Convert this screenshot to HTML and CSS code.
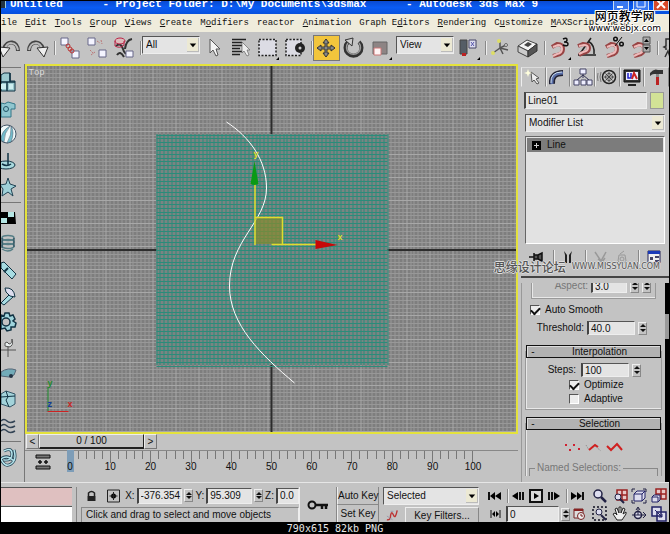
FILE: index.html
```html
<!DOCTYPE html>
<html lang="en">
<head>
<meta charset="utf-8">
<title>3ds Max</title>
<link rel="stylesheet" href="styles.css">
</head>
<body>
<div class="app">
  <header class="titlebar">
    <span class="logo"></span>
    <span class="caption">Untitled      - Project Folder: D:\My Documents\3dsmax      - Autodesk 3ds Max 9</span>
    <span class="winbtns">
      <button aria-label="Minimize"><svg width="14" height="10" viewBox="0 0 14 10"><path d="M3 6h6" stroke="#fff" stroke-width="2"/></svg></button>
      <button aria-label="Maximize"><svg width="14" height="10" viewBox="0 0 14 10"><path d="M3 0v6h8V0" stroke="#fff" fill="none"/></svg></button>
      <button class="close" aria-label="Close"><svg width="14" height="10" viewBox="0 0 14 10"><path d="M3 -1l8 8M11 -1l-8 8" stroke="#fff" stroke-width="2"/></svg></button>
    </span>
  </header>
  <nav class="menubar">
    <a href="#">ile</a><a href="#"><u>E</u>dit</a><a href="#"><u>T</u>ools</a><a href="#"><u>G</u>roup</a><a href="#"><u>V</u>iews</a><a href="#"><u>C</u>reate</a><a href="#">M<u>o</u>difiers</a><a href="#">reactor</a><a href="#"><u>A</u>nimation</a><a href="#">Graph E<u>d</u>itors</a><a href="#"><u>R</u>endering</a><a href="#">C<u>u</u>stomize</a><a href="#"><u>M</u>AXScript</a><a href="#"><u>H</u>elp</a>
  </nav>

  <div class="toolbar">
    <button aria-label="Undo"><svg viewBox="0 0 24 24"><path d="M20 15C20 5 9 3 6 13" fill="none" stroke="#444" stroke-width="4"/><path d="M20 14C18 5 9 5 7 13" fill="none" stroke="#bbb" stroke-width="2"/><path d="M1 11l11 1-7 9z" fill="#eee" stroke="#333"/></svg></button>
    <button aria-label="Redo"><svg viewBox="0 0 24 24"><path d="M4 15C4 5 15 3 18 13" fill="none" stroke="#444" stroke-width="4"/><path d="M4 14C6 5 15 5 17 13" fill="none" stroke="#bbb" stroke-width="2"/><path d="M23 11l-11 1 7 9z" fill="#eee" stroke="#333"/></svg></button>
    <i class="sep"></i>
    <button aria-label="Select and Link"><svg viewBox="0 0 24 24"><path d="M4 2h7v7H4zM15 15h7v7h-7z" fill="#f4f4ff" stroke="#668"/><g fill="none" stroke="#b33"><circle cx="11" cy="10" r="2"/><circle cx="13" cy="13" r="2"/><circle cx="15" cy="15" r="2"/></g></svg></button>
    <button aria-label="Unlink Selection"><svg viewBox="0 0 24 24"><path d="M4 2h7v7H4zM15 14h7v7h-7z" fill="#f4f4ff" stroke="#668"/><g fill="none" stroke="#b77"><path d="M13 5l3 2M17 4l1 4M6 14l3 3M7 19l4-3" stroke-dasharray="2 1"/></g></svg></button>
    <button aria-label="Bind to Space Warp"><svg viewBox="0 0 24 24"><path d="M5 10q5-4 7 3t5 3M6 19q3-5 7 2M14 13q1-9 7-10" fill="none" stroke="#333" stroke-width="2"/><ellipse cx="9" cy="5" rx="5" ry="3" fill="#dbb" stroke="#b24"/><path d="M4 5v5q5 3 9-1V5" fill="none" stroke="#b24"/><path d="M15 15h7v6h-7z" fill="#f4f4ff" stroke="#668"/></svg></button>
    <i class="sep"></i>
    <span class="combo filter"><select aria-label="Selection filter"><option>All</option></select><svg class="arrow" viewBox="0 0 12 12"><path d="M3 5h7l-3.500 4z"/></svg></span>
    <button aria-label="Select Object"><svg viewBox="0 0 24 24"><path d="M9 3v14l3-3 3 6 2-1-2-6h4z" fill="#f4f4f4" stroke="#555"/></svg></button>
    <button aria-label="Select by Name"><svg viewBox="0 0 24 24"><path d="M4 3.500h14M4 6.500h10M4 9.500h11M4 12.500h8M4 15.500h10M4 18.500h8" stroke="#222" stroke-width="1.500"/><path d="M14 6v11l2-2 3 5 2-1-2-5h3z" fill="#eee" stroke="#666" stroke-width=".7"/></svg></button>
    <button aria-label="Rectangular Selection"><svg viewBox="0 0 24 24"><rect x="4" y="3.500" width="17" height="16" fill="#dcdce4" stroke="#222" stroke-width="1.500" stroke-dasharray="2 1.500"/><path d="M24 21v3h-3z"/></svg></button>
    <button aria-label="Window Crossing"><svg viewBox="0 0 24 24"><rect x="4" y="3.500" width="15" height="16" fill="#dcdce4" stroke="#222" stroke-width="1.500" stroke-dasharray="2 1.500"/><circle cx="18" cy="12" r="5" fill="#222"/><circle cx="18" cy="12" r="1.500" fill="#ccc"/></svg></button>
    <i class="sep"></i>
    <button class="active" aria-label="Select and Move"><svg viewBox="0 0 24 24"><path d="M12 3l3 4h-2v4h4V9l4 3-4 3v-2h-4v4h2l-3 4-3-4h2v-4H7v2l-4-3 4-3v2h4V7H9z" fill="#888" stroke="#333"/></svg></button>
    <button aria-label="Select and Rotate"><svg viewBox="0 0 24 24"><path d="M18 6a8 8 0 1 1-11 0" fill="none" stroke="#333" stroke-width="4"/><path d="M18 7a7 7 0 1 1-11 0" fill="none" stroke="#999" stroke-width="1.500"/><path d="M4 4l8-2-1 8z" fill="#ccc" stroke="#333"/></svg></button>
    <button aria-label="Select and Scale"><svg viewBox="0 0 24 24"><path d="M5 6h14v12H5z" fill="#8d8484" stroke="#666"/><path d="M6 12h7v7H6z" fill="#fff4f4" stroke="#c77"/><path d="M24 21v3h-3z"/></svg></button>
    <span class="combo coords"><select aria-label="Reference coordinate system"><option>View</option></select><svg class="arrow" viewBox="0 0 12 12"><path d="M3 5h7l-3.500 4z"/></svg></span>
    <button aria-label="Use Pivot Point Center"><svg viewBox="0 0 24 24"><path d="M4 4h7v14H4z" fill="#555d66" stroke="#444"/><path d="M13 4h7v8h-7z" fill="#dde" stroke="#446"/><path d="M15 6l3 4M18 6l-3 4" stroke="#55a"/><path d="M6 18.500h4" stroke="#b22" stroke-width="3"/><path d="M24 21v3h-3z"/></svg></button>
    <i class="sep"></i>
    <button aria-label="Manipulate"><svg viewBox="0 0 24 24"><path d="M12 4v9M12 12l-7 5M12 12l8 2M12 12l6-3M12 12l3 6" stroke="#555" stroke-width="1.500"/><circle cx="11" cy="5" r="2" fill="#dd6"/><circle cx="5" cy="17" r="2" fill="#dd6"/><circle cx="18" cy="9" r="1.500" fill="#ddd" stroke="#666"/></svg></button>
    <button aria-label="Keyboard Override"><svg viewBox="0 0 24 24"><path d="M3 10l9-6 10 4-9 7z" fill="#f4f4f4" stroke="#444"/><path d="M3 10l10 5v6L3 16z" fill="#ccc" stroke="#444"/><path d="M13 15l9-7v7l-9 6z" fill="#555" stroke="#333"/><path d="M9 9l4-3 4 2-4 3z" fill="#444"/></svg></button>
    <i class="sep"></i>
    <button aria-label="Snap Toggle"><svg viewBox="0 0 24 24"><path d="M5 11l5-3q6 0 6 5t-6 6l-4 1" fill="none" stroke="#944" stroke-width="4"/><path d="M6 11l5-2q4 0 4 4t-5 5l-4 2" fill="none" stroke="#ebb" stroke-width="2"/><path d="M16 3q4-2 4 1 0 2-3 2 4 0 4 2 0 3-5 1" fill="none" stroke="#111" stroke-width="1.500"/><path d="M24 21v3h-3z"/></svg></button>
    <button aria-label="Angle Snap"><svg viewBox="0 0 24 24"><path d="M4 19h18M5 19L17 2M14 5q7 4 6 13" fill="none" stroke="#222" stroke-width="1.500"/><path d="M4 10l5-2q6 0 6 4t-6 5l-4 2" fill="none" stroke="#944" stroke-width="4"/><path d="M5 10l5-1q4 0 4 3t-5 4l-4 2" fill="none" stroke="#ebb" stroke-width="2"/></svg></button>
    <button aria-label="Percent Snap"><svg viewBox="0 0 24 24"><path d="M5 11l5-3q6 0 6 5t-6 6l-4 1" fill="none" stroke="#944" stroke-width="4"/><path d="M6 11l5-2q4 0 4 4t-5 5l-4 2" fill="none" stroke="#ebb" stroke-width="2"/><path d="M21 1l-7 9" stroke="#111"/><g fill="none" stroke="#111" stroke-width="1.500"><circle cx="14.500" cy="3" r="1.800"/><circle cx="20.500" cy="8" r="1.800"/></g></svg></button>
    <button aria-label="Spinner Snap"><svg viewBox="0 0 24 24"><path d="M5 11l5-3q6 0 6 5t-6 6l-4 1" fill="none" stroke="#944" stroke-width="4"/><path d="M6 11l5-2q4 0 4 4t-5 5l-4 2" fill="none" stroke="#ebb" stroke-width="2"/><path d="M15 1h7v7h-7zM15 9h7v7h-7z" fill="#aaa" stroke="#555"/><path d="M16 6l2.500-3L21 6zM16 11l2.500 3 2.500-3z"/></svg></button>
    <i class="sep"></i>
    <button aria-label="Named Selection Sets"><svg viewBox="0 0 24 24"><path d="M9 3H6v7L4 11l2 1v2M5 21l3-6 2 6" fill="none" stroke="#333" stroke-width="1.500"/></svg></button>
  </div>

  <main class="work">
    <aside class="reactor">
      <div class="tools">
        <button aria-label="Rigid bodies"><svg viewBox="0 0 16 22"><path d="M0 3l3-2h6v8h5v10H0z" fill="#9cc9cf" stroke="#134"/><path d="M0 10h14M6 10v9M9 1v9" stroke="#134" stroke-width="1.500"/><path d="M0 12h5v5H0zM8 12h4v5H8z" fill="#cdeef0"/></svg></button>
        <button aria-label="Cloth"><svg viewBox="0 0 16 22"><path d="M0 5q4 2 7-1l7 2v5h-4v8H0z" fill="#8fc6cf" stroke="#378"/><circle cx="5" cy="11" r="2.500" fill="none" stroke="#256"/></svg></button>
        <button aria-label="Soft body"><svg viewBox="0 0 16 22"><circle cx="6" cy="10" r="9" fill="#f0fafa" stroke="#456"/><path d="M9 2q-9 5-9 14l3 2q0-9 6-16zM10 2q4 6 0 16l-4 1q5-8 4-17z" fill="#72bccb" stroke="#456" stroke-width=".5"/></svg></button>
        <button aria-label="Rope"><svg viewBox="0 0 16 22"><ellipse cx="5" cy="15" rx="9" ry="4" fill="#a9dade" stroke="#134"/><path d="M7 3v12M1 14q5 3 9 0" fill="none" stroke="#134" stroke-width="1.500"/></svg></button>
        <button aria-label="Deforming mesh"><svg viewBox="0 0 16 22"><path d="M7 2l2 6 6 2-5 3 2 7-5-4-6 4 1-7-3-4 6-1z" fill="#9fd0d8" stroke="#245"/></svg></button>
      </div>
      <div class="tools">
        <button aria-label="Plane"><svg viewBox="0 0 16 22"><path d="M0 5h14l1 12H0z"/><path d="M7 5h6v5H7zM0 11h6v5H0z" fill="#b5e6e4"/></svg></button>
        <button aria-label="Spring"><svg viewBox="0 0 16 22"><g fill="none" stroke="#567e86" stroke-width="1.500"><ellipse cx="7" cy="5" rx="6" ry="2.500"/><ellipse cx="7" cy="9" rx="6" ry="2.500"/><ellipse cx="7" cy="13" rx="6" ry="2.500"/><path d="M1 16q6 4 11 0"/></g><path d="M1 5v10M13 5v9" stroke="#245"/></svg></button>
        <button aria-label="Dashpot"><svg viewBox="0 0 16 22"><path d="M0 4l3-1 12 12-4 5L0 9z" fill="#a7dce2" stroke="#134"/><path d="M7 9l-4 4" stroke="#134" stroke-width="2"/></svg></button>
        <button aria-label="Motor"><svg viewBox="0 0 16 22"><path d="M0 18l9-9 3 3-9 8z" fill="#a7dce2" stroke="#134"/><path d="M4 3q9-1 10 9l-5-1-4-4z" fill="#dde" stroke="#134"/></svg></button>
        <button aria-label="Gear"><svg viewBox="0 0 16 22"><path d="M4 2h4l1 3 3-1 2 4-2 2 3 2-1 4-4 0v3l-4 1-2-3-4 1V4l3 1z" fill="#9fd4dc" stroke="#134" stroke-width="1.500"/><circle cx="5" cy="11" r="4" fill="#c3c3c3" stroke="#134" stroke-width="1.500"/></svg></button>
        <button aria-label="Wind"><svg viewBox="0 0 16 22"><path d="M0 13h15M7 9v11M4 9q-1-4 2-4l2 2q3 0 3-5 2 7-3 8z" fill="#e8eeee" stroke="#555"/></svg></button>
        <button aria-label="Toy car"><svg viewBox="0 0 16 22"><path d="M0 9q7-5 15-2l-2 5-5 2-8-1z" fill="#72abb8" stroke="#567"/><circle cx="10" cy="13" r="2" fill="#234"/></svg></button>
        <button aria-label="Fracture"><svg viewBox="0 0 16 22"><path d="M0 5l5-3 9 3v10l-5 3-9-3z" fill="#a3d3da" stroke="#356"/><path d="M5 2l2 6-2 3 3 7M0 8l14-1" fill="none" stroke="#134"/></svg></button>
        <button aria-label="Water"><svg viewBox="0 0 16 22"><path d="M0 6q3-3 6 0t8 0M0 11q3-3 6 0t8 0M0 16q3-3 6 0t8 0" fill="none" stroke="#345" stroke-width="1.500"/></svg></button>
      </div>
      <div class="tools">
        <button aria-label="Constraint"><svg viewBox="0 0 16 22"><path d="M3 5q8-4 8 3t-8 6M13 4q3 10-3 14T0 13q6-5 13 2" fill="none" stroke="#245" stroke-width="3"/><path d="M3 5q8-4 8 3t-8 6M13 4q3 10-3 14T0 13q6-5 13 2" fill="none" stroke="#b5e4ec" stroke-width="1.500"/></svg></button>
      </div>
    </aside>

    <section class="stage">
      <div class="viewport">
        <svg id="scene" viewBox="27 66 490 366" preserveAspectRatio="xMidYMid slice" role="img" aria-label="Top viewport">
          <path id="fine" class="fine"/>
          <path id="major" class="major"/>
          <path class="axis" d="M272 66v366M27 250h490"/>
          <rect x="157" y="134" width="231" height="231" class="plane"/>
          <path id="mesh" class="mesh"/>
          <path class="spline" d="M227 122C250 137 267 160 267 188C267 222 230 240 230 286C230 325 262 355 295 383"/>
          <rect x="256" y="217" width="27" height="27" fill="#8a8a2c" fill-opacity=".7"/>
          <path d="M255.500 245V184M256 217.500h27v27M272 244.500h45" fill="none" stroke="#dede2c" stroke-width="1.500"/>
          <path d="M251 184q4 2 8 0l-4-23z" fill="#0a9a14"/>
          <path d="M316 240v9l22-4z" fill="#c80808"/>
          <text x="254" y="157" class="gizmo">y</text>
          <text x="338" y="240" class="gizmo">x</text>
          <path d="M48.500 387v24" stroke="#1f8c2c"/><path d="M48 411.500h21" stroke="#c22"/>
          <text x="48" y="386" class="tri" fill="#1f8c2c">y</text>
          <text x="48" y="407" class="tri" fill="#123a9c">z</text>
          <text x="68" y="407" class="tri" fill="#c22">x</text>
          <text x="29" y="75" class="vname">Top</text>
        </svg>
      </div>
      <div class="slider">
        <button aria-label="Previous frame">&lt;</button><button class="thumb">0 / 100</button><button aria-label="Next frame">&gt;</button>
      </div>
      <div class="track">
        <svg class="curve" viewBox="0 0 16 16"><path d="M1 1h14v3H1zM1 12h14v3H1z" fill="#777" stroke="#111"/><path d="M3 8h4M5 6v4M9 8h4M11 6v4" fill="none" stroke="#111" stroke-width="1.500"/></svg>
        <div class="ruler">
          <svg id="ticks" viewBox="0 0 403 12" preserveAspectRatio="none"><path id="tickpath"/></svg>
          <div class="nums"><span class="now">0</span><span>10</span><span>20</span><span>30</span><span>40</span><span>50</span><span>60</span><span>70</span><span>80</span><span>90</span><span>100</span></div>
        </div>
      </div>
    </section>

    <aside class="panel">
      <div class="tabs">
        <button aria-label="Create"><svg viewBox="0 0 20 18"><path d="M8 4l8 6-3 1 3 4-2 1-3-4-2 2z" fill="#eee" stroke="#555"/><path d="M5 1l1 3 3 1-3 1-1 3-1-3-3-1 3-1z" fill="#ffd"/></svg></button>
        <button class="on" aria-label="Modify"><svg viewBox="0 0 20 18"><path d="M4 16Q3 5 15 5" fill="none" stroke="#223" stroke-width="6"/><path d="M4 16Q3 5 15 5" fill="none" stroke="#5a6fa8" stroke-width="3"/><path d="M3 15Q2 4 14 4" fill="none" stroke="#cde"/></svg></button>
        <button aria-label="Hierarchy"><svg viewBox="0 0 20 18"><path d="M10 6v4M10 7l-6 5M10 7l6 5" stroke="#335"/><path d="M7 1h6v5H7zM1 12h5v5H1zM8 12h5v5H8zM14 12h5v5h-5z" fill="#eef" stroke="#446"/></svg></button>
        <button aria-label="Motion"><svg viewBox="0 0 20 18"><circle cx="12" cy="9" r="6.500" fill="#ccc" stroke="#222" stroke-width="1.500"/><circle cx="12" cy="9" r="3.500" fill="#eee" stroke="#444"/><path d="M12 4v10M7 9h10M8.500 5.500l7 7M15.500 5.500l-7 7" stroke="#444"/><path d="M4 4q-2 5 0 10M1 5q-1 4 0 8" fill="none" stroke="#777"/></svg></button>
        <button aria-label="Display"><svg viewBox="0 0 20 18"><path d="M2 2h16v12H2z" fill="#333" stroke="#111"/><path d="M4 4h12v8H4z" fill="#eef"/><path d="M6 5v5h3V5" fill="none" stroke="#22c" stroke-width="1.500"/><path d="M10 11l2-6 3 6" fill="none" stroke="#c22" stroke-width="2"/><path d="M6 17h8" stroke="#222" stroke-width="2"/></svg></button>
        <button aria-label="Utilities"><svg viewBox="0 0 20 18"><path d="M3 5q4-5 8-3h5v4H7q-2 0-4 2z" fill="#333"/><path d="M9 6h3v5H9z" fill="#888"/><path d="M9 9h3v8H9z" fill="#b22"/></svg></button>
      </div>
      <div class="namerow"><input class="field" aria-label="Object name" value="Line01"><button class="swatch" aria-label="Object color"></button></div>
      <span class="combo modlist"><select aria-label="Modifier List"><option>Modifier List</option></select><svg class="arrow" viewBox="0 0 12 12"><path d="M3 5h7l-3.500 4z"/></svg></span>
      <div class="stack"><div class="row"><svg width="9" height="9" viewBox="0 0 9 9"><path d="M0 0h9v9H0z"/><path d="M2 4.500h5M4.500 2v5" stroke="#ccc"/></svg>Line</div></div>
      <div class="stackbtns">
        <button aria-label="Pin Stack"><svg viewBox="0 0 14 14"><path d="M0 7h5M5 3v8M5 5h4v4H5M9 5l4-2v8L9 9" stroke="#111" fill="#555" stroke-width="1.500"/></svg></button><i class="sep"></i>
        <button aria-label="Show end result"><svg viewBox="0 0 14 14"><path d="M3 1l3 4v8H4V5zM11 1L8 5v8h2V5z" fill="#222"/></svg></button><i class="sep"></i>
        <button aria-label="Make unique" disabled><svg viewBox="0 0 14 14"><path d="M1 2l6 9 5-9M4 9l4 3 3-4" stroke="#999" fill="none" stroke-width="1.500"/></svg></button>
        <button aria-label="Remove modifier" disabled><svg viewBox="0 0 14 14"><path d="M4 5h6l1 6-2 2H5l-2-2zM5 4l4-3" stroke="#999" fill="none"/><circle cx="7" cy="9" r="2" fill="none" stroke="#999"/></svg></button><i class="sep"></i>
        <button aria-label="Configure modifier sets"><svg viewBox="0 0 14 14"><path d="M1 1h12v12H1z" fill="#eee" stroke="#225"/><path d="M1 2.500h12" stroke="#1a3ab8" stroke-width="3"/><path d="M3 7h3v3H3zM8 6h4v2H8zM8 10h4v2H8z" fill="#446"/></svg></button>
      </div>
      <div class="rolls">
        <div class="rollbody">
          <div class="group cutoff">
            <div class="line aspect"><label for="aspect" class="dim">Aspect:</label><input id="aspect" class="field" value="3.0"><span class="spin"><button aria-label="Up"></button><button aria-label="Down"></button></span><span class="spin"><button aria-label="Lock"></button><button aria-label="Lock"></button></span></div>
          </div>
          <div class="line auto"><input type="checkbox" id="smooth" checked><label for="smooth">Auto Smooth</label></div>
          <div class="line thr"><label for="thr">Threshold:</label><input id="thr" class="field" value="40.0"><span class="spin"><button aria-label="Up"></button><button aria-label="Down"></button></span></div>
          <section class="group interp">
            <button class="head"><span>-</span>Interpolation</button>
            <div class="line steps"><label for="steps">Steps:</label><input id="steps" class="field" value="100"><span class="spin"><button aria-label="Up"></button><button aria-label="Down"></button></span></div>
            <div class="line opt"><input type="checkbox" id="opt" checked><label for="opt">Optimize</label></div>
            <div class="line opt"><input type="checkbox" id="ada"><label for="ada">Adaptive</label></div>
          </section>
          <section class="group selection">
            <button class="head"><span>-</span>Selection</button>
            <div class="subobj">
              <button aria-label="Vertex"><svg viewBox="0 0 18 12"><path d="M1 3h2v2H1zM5 8h2v2H5zM9 3h2v2H9zM14 7h2v2h-2z" fill="#d02030"/></svg></button>
              <button aria-label="Segment"><svg viewBox="0 0 18 12"><path d="M1 4l3 5M10 5l6 5" stroke="#888" stroke-dasharray="1 1"/><path d="M4 9l6-5 3 2" fill="none" stroke="#d02020" stroke-width="2"/></svg></button>
              <button aria-label="Spline"><svg viewBox="0 0 18 12"><path d="M1 5l4 4 6-6 5 6" fill="none" stroke="#d02020" stroke-width="2"/></svg></button>
            </div>
            <fieldset><legend>Named Selections:</legend></fieldset>
          </section>
        </div>
        <div class="scroll"><i></i></div>
      </div>
    </aside>
  </main>

  <footer class="status">
    <div class="listener"><div class="pink"></div><div class="white"></div></div>
    <div class="info">
      <div class="coordsrow">
        <button aria-label="Selection lock" class="plain"><svg viewBox="0 0 14 14"><path d="M4 7V4q3-3 6 0v3" fill="none" stroke="#222" stroke-width="1.500"/><path d="M3 7h8v5H3z" fill="#222"/></svg></button>
        <button aria-label="Absolute mode" class="plain"><svg viewBox="0 0 14 14"><path d="M1 1h12v12H1z" fill="none" stroke="#222"/><circle cx="7" cy="7" r="2.500"/><path d="M7 3v8M3 7h8" stroke="#222"/></svg></button>
        <label for="cx">X:</label><input id="cx" class="field" value="-376.354"><span class="spin"><button aria-label="Up"></button><button aria-label="Down"></button></span>
        <label for="cy">Y:</label><input id="cy" class="field" value="95.309"><span class="spin"><button aria-label="Up"></button><button aria-label="Down"></button></span>
        <label for="cz">Z:</label><input id="cz" class="field short" value="0.0">
      </div>
      <div class="prompt">Click and drag to select and move objects</div>
    </div>
    <button class="key" aria-label="Set keys"><svg viewBox="0 0 22 12"><circle cx="5" cy="6" r="3.500" fill="none" stroke="#111" stroke-width="2"/><path d="M8 6h13M15 6v4M19 6v4" stroke="#111" stroke-width="2.500"/></svg></button>
    <div class="keymode"><button>Auto Key</button><button>Set Key</button></div>
    <div class="keysel">
      <span class="combo"><select aria-label="Key selection set"><option>Selected</option></select><svg class="arrow" viewBox="0 0 12 12"><path d="M3 5h7l-3.500 4z"/></svg></span>
      <div class="filters"><button class="plain" aria-label="Tangents"><svg viewBox="0 0 16 14"><path d="M2 11q4 1 4-5 1-5 3 0t4-5" fill="none" stroke="#b33" stroke-width="1.500"/><path d="M2 7l6 4M6 2h3" stroke="#99a"/></svg></button><button class="kf">Key Filters...</button></div>
    </div>
    <div class="play">
      <div class="playrow">
        <button aria-label="Go to start"><svg viewBox="0 0 18 14"><path d="M3 3v8" stroke="#111" stroke-width="2"/><path d="M9 3v8L4 7zM15 3v8l-6-4z"/></svg></button><i class="sep"></i>
        <button aria-label="Previous"><svg viewBox="0 0 18 14"><path d="M9 3v8L3 7z"/><path d="M11 3v8M14 3v8" stroke="#111" stroke-width="2"/></svg></button>
        <button aria-label="Play"><svg viewBox="0 0 18 14"><path d="M3 1h12v12H3z" fill="#d8d8d8" stroke="#111" stroke-width="2"/><path d="M7 4v6l5-3z"/></svg></button>
        <button aria-label="Next"><svg viewBox="0 0 18 14"><path d="M9 3v8l6-4z"/><path d="M4 3v8M7 3v8" stroke="#111" stroke-width="2"/></svg></button><i class="sep"></i>
        <button aria-label="Go to end"><svg viewBox="0 0 18 14"><path d="M15 3v8" stroke="#111" stroke-width="2"/><path d="M9 3v8l5-4zM3 3v8l6-4z"/></svg></button>
      </div>
      <div class="playrow">
        <button aria-label="Key mode"><svg viewBox="0 0 18 14"><path d="M5 3v8M14 3v8" stroke="#111"/><path d="M6 7l3-3v6zM13 7l-3-3v6z"/></svg></button>
        <input class="field frame" aria-label="Current frame" value="0"><span class="spin"><button aria-label="Up"></button><button aria-label="Down"></button></span>
        <button aria-label="Time configuration"><svg viewBox="0 0 18 14"><path d="M4 2h9v9H4z" fill="#ddd" stroke="#722"/><path d="M4 3h9" stroke="#822" stroke-width="2"/><circle cx="11" cy="9" r="3.500" fill="#eee" stroke="#722"/><path d="M11 7v2h2" fill="none" stroke="#722"/></svg></button>
      </div>
    </div>
    <div class="navs">
      <button aria-label="Zoom"><svg viewBox="0 0 16 16"><circle cx="6" cy="6" r="4" fill="#dde" stroke="#224" stroke-width="1.500"/><path d="M9 9l5 5" stroke="#224" stroke-width="2.500"/></svg></button>
      <button aria-label="Zoom All"><svg viewBox="0 0 16 16"><path d="M5 2h10v10H5zM10 2v10M5 7h10" fill="#e8c8c8" stroke="#922" stroke-width="1.500"/><circle cx="6" cy="9" r="3" fill="#dde" stroke="#224"/><path d="M8 11l4 4" stroke="#224" stroke-width="2"/></svg></button>
      <button aria-label="Zoom Extents"><svg viewBox="0 0 16 16"><path d="M1 4V1h3M12 1h3v3M1 12v3h3M12 15h3v-3" fill="none" stroke="#224"/><path d="M3 6l3-3h8v7l-3 3H3zM3 6h8v7M11 6l3-3" fill="#dde" stroke="#226"/></svg></button>
      <button aria-label="Zoom Extents All"><svg viewBox="0 0 16 16"><path d="M5 1h10v10H5zM10 1v10M5 6h10" fill="#e8c8c8" stroke="#922" stroke-width="1.500"/><path d="M1 9l2-2h6v5l-2 2H1zM1 9h6v5" fill="#dde" stroke="#226"/></svg></button>
      <button aria-label="Region Zoom"><svg viewBox="0 0 16 16"><path d="M1 1h13v13H1z" fill="none" stroke="#112" stroke-width="1.500" stroke-dasharray="2 2"/><circle cx="7" cy="6" r="3" fill="#dde" stroke="#224"/><path d="M9 9l5 5" stroke="#224" stroke-width="2"/></svg></button>
      <button aria-label="Pan"><svg viewBox="0 0 16 16"><path d="M5 14L1 8l2-1 2 2-2-6 2-1 2 5V1h2v6l2-5 2 1-2 5 3-2v2l-4 6z" fill="#eee" stroke="#222"/></svg></button>
      <button aria-label="Arc Rotate"><svg viewBox="0 0 16 16"><circle cx="7" cy="9" r="3.500" fill="#dde" stroke="#224" stroke-width="1.500"/><path d="M1 9h13M7 9V2M5 4l2-3 2 3M12 6l3 3-3 3" fill="none" stroke="#224"/></svg></button>
      <button aria-label="Maximize Viewport"><svg viewBox="0 0 16 16"><path d="M1 1h9v9H1zM6 6h9v9H6z" fill="#dde" stroke="#226" stroke-width="1.500"/><path d="M4 4l7 7M11 8v3H8" fill="none" stroke="#226"/></svg></button>
    </div>
  </footer>
  <div class="fileinfo">790x615 82kb PNG</div>
  <div class="mark top"><b>网页教学网</b><span>www.webjx.com</span></div>
  <div class="mark mid"><b>思缘设计论坛</b><span>WWW.MISSYUAN.COM</span></div>
</div>
<script src="script.js"></script>
</body>
</html>
```
FILE: styles.css
```css
* { box-sizing: border-box; }
body { margin: 0; background: #000; }
.app {
  position: relative;
  display: flex;
  flex-direction: column;
  min-height: 100vh;
  padding: 1px 1px 0;
  overflow: hidden;
  font: 10px/12px "Liberation Sans", Arial, sans-serif;
  color: #111;
}
button, input, select {
  font: inherit; color: inherit; margin: 0; padding: 0; border: 0;
  border-radius: 0; background: none; min-width: 0; outline: 0;
}
svg { display: block; }
i.sep { flex: none; width: 5px; height: 14px; border-right: 1px solid #eee; box-shadow: inset -1px 0 #888; }

.titlebar { display: flex; height: 13px; background: linear-gradient(#0a4ad0, #0a5cf4 50%, #0650dc); overflow: hidden; }
.logo { width: 5px; height: 7px; background: #234; border-right: 1px solid #9cd; }
.caption { flex: 1; padding-left: 4px; margin-top: -3px; white-space: pre; overflow: hidden; color: #fff; font: bold 11px/12px "Liberation Mono", monospace; }
.winbtns { display: flex; gap: 6px; padding-right: 1px; }
.winbtns button { width: 14px; height: 9px; background: #3a78f0; box-shadow: 0 0 0 1px #cde; }
.winbtns .close { background: #d8492a; }

.menubar { display: flex; gap: 8px; height: 18px; background: #efecdc; overflow: hidden; }
.menubar a { flex: none; color: #111; text-decoration: none; white-space: nowrap; font: 9px/18px "Liberation Mono", monospace; }

.toolbar { display: flex; align-items: center; height: 32px; background: #c3c3c3; overflow: hidden; }
.toolbar > button { flex: none; width: 27px; height: 26px; padding: 1px; }
.toolbar > button:first-child { margin-left: -4px; }
.toolbar > button svg { width: 24px; height: 24px; }
.toolbar .active { background: #f2c53c; border: 1px solid #777; padding: 0; }
.combo { display: grid; grid-template: 16px / 1fr; align-items: center; border: 1px solid #eee; border-top-color: #555; border-left: 1px solid #555; background: #e4e4e4; }
.combo > * { grid-area: 1 / 1; }
.combo select { appearance: none; width: 100%; height: 16px; padding-left: 3px; }
.combo .arrow { justify-self: end; width: 12px; height: 14px; background: #ece9d4; border: 1px solid #bbb; border-left: 0; border-top: 0; pointer-events: none; }
.toolbar .combo { flex: none; width: 58px; margin-bottom: 6px; }
.toolbar .coords { margin: 0 1px 6px 2px; }

.work { flex: 1; display: grid; grid-template-columns: 24px minmax(0, 1fr) 151px; background: #c3c3c3; }
.reactor { display: flex; flex-direction: column; border-right: 1px solid #777; padding-top: 3px; }
.tools { display: flex; flex-direction: column; margin-right: 3px; padding: 2px 0; border-top: 1px solid #777; }
.tools button { height: 26px; padding: 2px 0; }
.tools svg { width: 16px; height: 22px; }

.stage { display: flex; flex-direction: column; }
.viewport { flex: 1; display: flex; min-height: 0; border: 2px solid #e4e23c; background: #7e7e7e; }
.viewport svg { flex: 1; width: 100%; height: 366px; }
.fine { stroke: #989898; fill: none; }
.major { stroke: #a8a8a8; fill: none; }
.axis { stroke: #2c2c2c; stroke-width: 2; }
.plane { fill: #7a8482; }
.mesh { stroke: #2a8c7a; fill: none; }
.spline { stroke: #fff; stroke-width: 1; fill: none; }
.gizmo { fill: #dede2c; font: bold 9px "Liberation Sans", sans-serif; }
.tri { font: bold 9px "Liberation Sans", sans-serif; }
.vname { fill: #ddd; font: 9px "Liberation Mono", monospace; }
.slider { display: flex; height: 15px; padding-left: 1px; }
.slider button { width: 13px; height: 15px; border: 1px solid; border-color: #eee #777 #777 #eee; }
.slider .thumb { width: 105px; border-color: #eee #222 #222 #eee; border-bottom-width: 2px; }
.track { display: flex; height: 32px; margin-top: 1px; border-top: 1px solid #888; }
.curve { width: 16px; height: 16px; margin: 3px 0 0 10px; }
.ruler { flex: 1; margin: 0 45px 0 19px; }
#ticks { width: 100%; height: 12px; stroke: #777; }
.nums { display: flex; justify-content: space-between; margin: -2px -10px 0; }
.nums span { width: 20px; text-align: center; }
.nums .now { background: linear-gradient(#7d9db8, #7d9db8) center / 7px 22px no-repeat; padding-top: 12px; margin-top: -12px; }

.panel { display: flex; flex-direction: column; min-width: 0; padding: 3px 0 0 3px; }
.tabs { display: grid; grid-template-columns: repeat(6, 1fr); height: 20px; }
.tabs button { border: 1px solid; border-color: #ddd #888 #c3c3c3 #eee; display: grid; place-items: center; }
.tabs svg { width: 20px; height: 18px; }
.field { background: #e4e4e4; border: 1px solid #eee; border-top-color: #555; border-left: 2px solid #444; padding-left: 2px; }
.namerow { display: flex; gap: 3px; margin: 5px 5px 0 3px; height: 17px; }
.namerow .field { flex: 1; }
.swatch { width: 14px; background: #d2e296; border: 1px solid #999; }
.modlist { margin: 5px 4px 0 4px; }
.stack { height: 108px; margin: 4px 4px 0 4px; padding: 1px; background: #e2e2e2; border: 1px solid #666; border-right-color: #fff; border-bottom-color: #fff; }
.stack .row { display: flex; align-items: center; gap: 6px; height: 14px; padding-left: 5px; background: #7c7c7c; }
.stackbtns { display: flex; align-items: center; height: 26px; padding: 0 8px 0 8px; justify-content: space-between; }
.stackbtns svg { width: 14px; height: 14px; }
.rolls { display: flex; flex: 1; margin-top: 6px; padding-top: 5px; border-top: 2px solid #444; }
.rollbody { flex: 1; min-width: 0; border-left: 1px solid #999; padding: 0 3px; }
.group { border: 1px solid #999; box-shadow: inset 1px -1px #e8e8e8; }
.line { display: flex; align-items: center; gap: 3px; }
.line .field { width: 48px; height: 14px; }
.cutoff { height: 16px; border-top: 0; margin: 0 6px 0 6px; overflow: hidden; }
.aspect { justify-content: flex-end; margin: -4px 4px 0 0; }
.aspect .field { width: 36px; }
.dim { color: #777; }
.spin { display: flex; flex-direction: column; flex: none; width: 9px; height: 13px; border: 1px solid; border-color: #eee #888 #888 #eee; justify-content: space-evenly; align-items: center; }
.spin button { width: 0; height: 0; border: 3px solid transparent; border-top: 0; border-bottom: 3px solid #111; }
.spin button:last-child { border-bottom: 0; border-top: 3px solid #111; }
input[type=checkbox] { appearance: none; width: 10px; height: 10px; background: #ececec; border: 1px solid #fff; border-top-color: #555; border-left-color: #555; display: grid; place-items: center; }
input[type=checkbox]:checked::after { content: ""; width: 7px; height: 4px; border: solid #111; border-width: 0 0 2px 2px; transform: rotate(-45deg); }
.auto { gap: 5px; margin: 5px 0 0 5px; }
.thr { justify-content: flex-end; margin: 5px 15px 0 0; }
.interp { margin-top: 16px; padding-bottom: 3px; }
.head { display: block; width: 100%; height: 13px; margin-top: -7px; border: 1px solid #111; background: #b2b2b2; box-shadow: inset 1px 1px #ddd; text-align: center; line-height: 11px; }
.head span { float: left; width: 12px; }
.steps { justify-content: flex-end; margin: 5px 20px 1px 0; }
.steps label { margin-right: 2px; }
.opt { gap: 5px; margin: 0 0 0 43px; height: 14px; }
.selection { margin-top: 13px; border-bottom: 0; box-shadow: inset 1px 0 #e8e8e8; }
.subobj { display: flex; justify-content: center; gap: 3px; margin-top: 11px; }
.subobj svg { width: 18px; height: 12px; }
fieldset { margin: 9px 3px 0; padding: 0; height: 14px; border: 1px solid #888; border-bottom: 0; min-width: 0; }
legend { margin-left: 5px; padding: 0 2px; color: #777; line-height: 12px; }
.scroll { width: 4px; background: #000; padding-top: 31px; }
.scroll i { display: block; height: 25px; background: #999; }

.status { display: flex; height: 40px; padding-top: 4px; background: #c3c3c3; border-top: 1px solid #e6e6e6; overflow: hidden; }
.listener { display: grid; grid-template-rows: 18px 1fr; gap: 1px; width: 76px; padding-right: 4px; border-right: 1px solid #888; }
.pink { background: #dfc0c0; border-top: 1px solid #555; }
.white { background: #fff; border-top: 1px solid #555; }
.info { display: flex; flex-direction: column; gap: 3px; width: 222px; padding-left: 4px; }
.coordsrow { display: flex; align-items: center; gap: 2px; height: 17px; }
.coordsrow .field { width: 48px; height: 16px; }
.coordsrow .short { width: 24px; }
.plain svg { width: 15px; height: 14px; }
.coordsrow .plain { width: 21px; padding-left: 3px; }
.prompt { flex: 1; border: 1px solid #888; border-right-color: #eee; border-bottom: 0; padding: 1px 4px; white-space: nowrap; }
.key { width: 38px; border-right: 1px solid #888; border-left: 1px solid #eee; display: grid; place-items: center; }
.key svg { width: 22px; height: 12px; }
.keymode { display: grid; grid-template-rows: 18px 18px; width: 42px; border-right: 1px solid #888; }
.keymode button { border-bottom: 1px solid #888; border-left: 1px solid #eee; white-space: nowrap; }
.keysel { width: 102px; padding: 0 2px 0 4px; }
.filters { display: flex; margin-top: 2px; }
.filters .plain { width: 22px; padding-left: 2px; }
.kf { flex: 1; height: 17px; border: 1px solid; border-color: #eee #888 #888 #eee; }
.play { width: 109px; padding-left: 5px; }
.playrow { display: flex; align-items: center; height: 18px; }
.playrow button svg { width: 18px; height: 14px; }
.frame { width: 53px; height: 16px; margin: 0 2px; }
.navs { flex: 1; display: grid; grid-template: 18px 18px / repeat(4, 1fr); justify-items: center; align-items: center; }
.navs svg { width: 16px; height: 16px; }
.fileinfo { height: 13px; text-align: center; color: #e8e8e8; font: 10px/13px "DejaVu Sans Mono", monospace; }

.mark { position: absolute; display: flex; white-space: nowrap; pointer-events: none; font-family: "DejaVu Sans", "Noto Sans CJK SC", sans-serif; text-shadow: 1px 0 #fff, -1px 0 #fff, 0 1px #fff, 0 -1px #fff, 1px 1px #fff, -1px -1px #fff; }
.mark b { font: 500 12px/14px "Noto Sans CJK SC", sans-serif; }
.top { top: 9px; right: 9px; flex-direction: column; align-items: center; color: #000; }
.top span { font-size: 9px; line-height: 10px; }
.mid { top: 260px; right: 10px; gap: 6px; align-items: center; color: #555; text-shadow: 1px 0 #ddd, -1px 0 #ddd, 0 1px #ddd, 0 -1px #ddd; }
.mid span { font-size: 8px; }
```
FILE: script.js
```js
// Builds the grid, mesh and time ruler line sets.
var step = 3.85, cx = 272, cy = 250;
var fine = '', major = '', mesh = '', k, x, y;
for (k = -64; k <= 64; k++) {
  x = Math.round(cx + k * step) + 0.5;
  y = Math.round(cy + k * step) + 0.5;
  var v = 'M' + x + ' 66v366', h = 'M27 ' + y + 'h490';
  if ((k + 66) % 6 === 5) { major += v + h; } else { fine += v + h; }
}
for (k = -30; k <= 30; k++) {
  x = Math.round(cx + k * step) + 0.5;
  y = Math.round(cy + k * step) + 0.5;
  mesh += 'M' + x + ' 134v231M157 ' + y + 'h231';
}
document.getElementById('fine').setAttribute('d', fine);
document.getElementById('major').setAttribute('d', major);
document.getElementById('mesh').setAttribute('d', mesh);

var ticks = '';
for (k = 0; k <= 50; k++) {
  ticks += 'M' + (Math.round(k * 8.04) + 0.5) + ' 0v' + (k % 5 ? 8 : 12);
}
document.getElementById('tickpath').setAttribute('d', ticks);
```
